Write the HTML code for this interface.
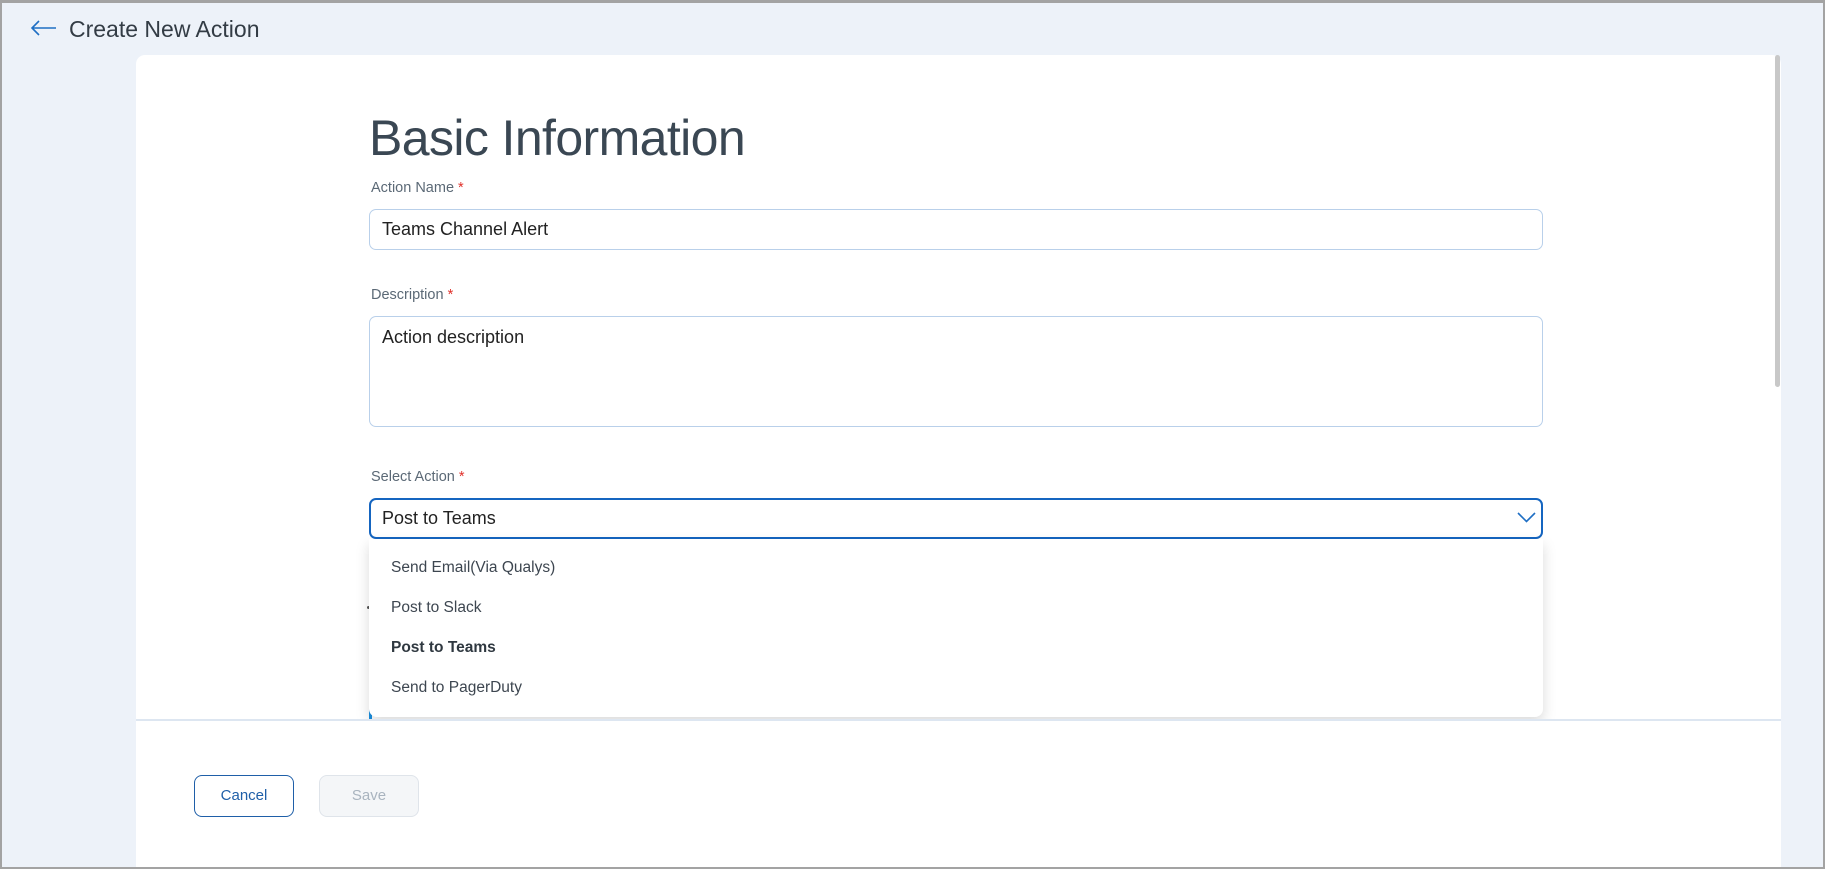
<!DOCTYPE html>
<html><head><meta charset="utf-8"><style>
*{box-sizing:border-box;margin:0;padding:0}
html{width:1825px;height:869px;overflow:hidden}
body{width:1825px;height:869px;overflow:hidden;background:#edf2f9;font-family:"Liberation Sans",Arial,sans-serif;position:relative;border:2px solid #a3a3a3;border-top-width:3px}
.abs{position:absolute}
.hdr{left:67px;top:13px;font-size:23px;color:#333c45}
.card{left:134px;top:52px;width:1645px;height:812px;background:#fff;border-radius:9px 9px 0 0}
.sb{left:1773px;top:52px;width:5px;height:332px;background:#c8c8c8;border-radius:3px}
.title{left:367px;top:106px;font-size:50px;color:#3a4753;font-weight:300;letter-spacing:-0.6px}
.lbl{font-size:14.5px;color:#5b6976}
.lbl b{color:#e0302a;font-weight:normal}
.inp{left:367px;width:1174px;border:1px solid #b9d0ea;border-radius:7px;font-size:18px;color:#222;padding-left:12px}
.dd{left:367px;top:536px;width:1174px;height:178px;background:#fff;border-radius:0 0 8px 8px;box-shadow:0 6px 14px rgba(0,0,0,.15)}
.it{position:absolute;left:22px;font-size:15.5px;color:#3d4650}
.foot{left:134px;top:716px;width:1645px;height:148px;background:#fff;border-top:2px solid #dde6f1}
.btn{top:772px;height:42px;width:100px;border-radius:8px;font-size:15px;text-align:center;line-height:40px}
</style></head><body>
<svg class="abs" style="left:28px;top:16px" width="27" height="18" viewBox="0 0 27 18"><path d="M26 9H2M9 2L2 9l7 7" fill="none" stroke="#1f6fc4" stroke-width="1.6"/></svg>
<div class="abs hdr">Create New Action</div>
<div class="abs card"></div>
<div class="abs sb"></div>
<div class="abs title">Basic Information</div>
<div class="abs lbl" style="left:369px;top:177px">Action Name <b>*</b></div>
<div class="abs inp" style="top:206px;height:41px;line-height:39px">Teams Channel Alert</div>
<div class="abs lbl" style="left:369px;top:284px">Description <b>*</b></div>
<div class="abs inp" style="top:313px;height:111px;padding-top:10px">Action description</div>
<div class="abs lbl" style="left:369px;top:466px">Select Action <b>*</b></div>
<div class="abs inp" style="top:495px;height:41px;line-height:37px;border:2px solid #1565c0;padding-left:11px">Post to Teams</div>
<svg class="abs" style="left:1515px;top:509px" width="19" height="12" viewBox="0 0 19 12"><path d="M1 1l8.5 8.5L18 1" fill="none" stroke="#1f6fc4" stroke-width="1.6"/></svg>
<div class="abs" style="left:367px;top:650px;width:3px;height:66px;background:#1a8fe0"></div>
<div class="abs" style="left:365px;top:603px;width:3px;height:3px;background:#555;border-radius:2px"></div>
<div class="abs dd">
<div class="it" style="top:20px">Send Email(Via Qualys)</div>
<div class="it" style="top:60px">Post to Slack</div>
<div class="it" style="top:100px;font-weight:bold;color:#2f3840">Post to Teams</div>
<div class="it" style="top:140px">Send to PagerDuty</div>
</div>
<div class="abs foot"></div>
<div class="abs btn" style="left:192px;border:1.5px solid #1f5fa8;color:#1f5fa8">Cancel</div>
<div class="abs btn" style="left:317px;border:1px solid #dfe4ea;background:#f4f6f8;color:#a9b4bf">Save</div>
</body></html>
